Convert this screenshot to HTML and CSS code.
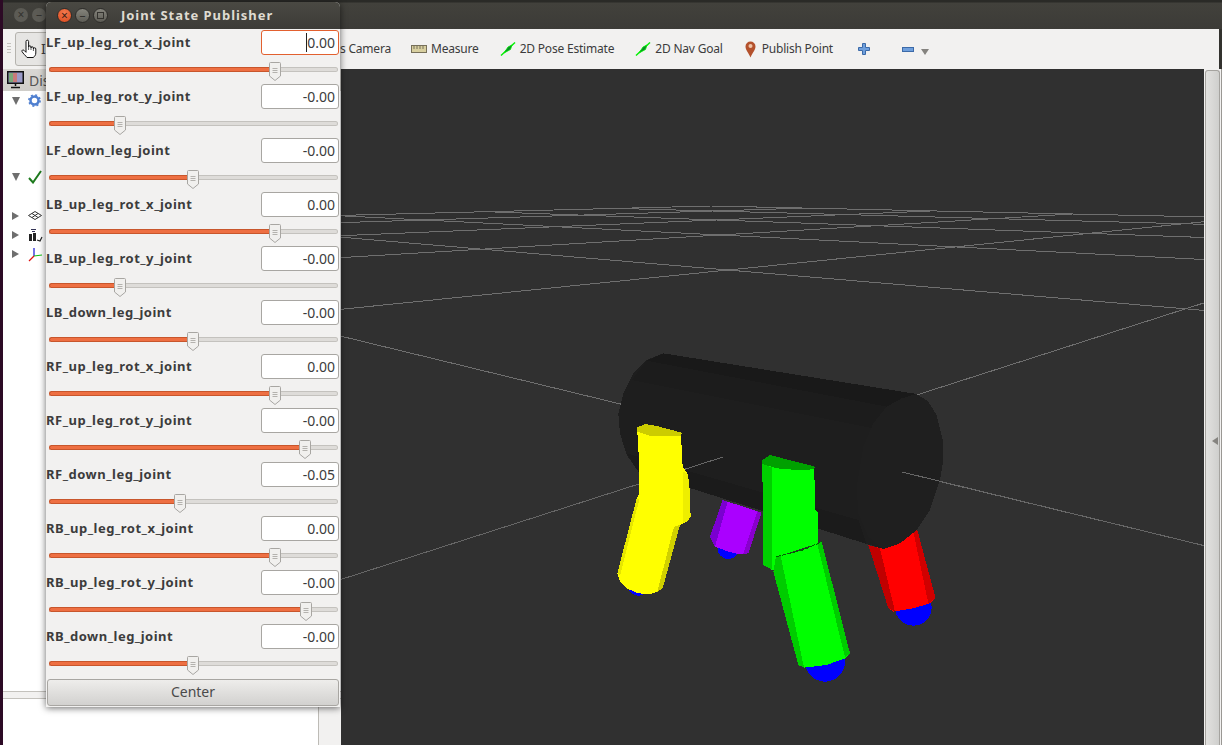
FILE: index.html
```html
<!DOCTYPE html>
<html lang="en">
<head>
  <meta charset="UTF-8">
  <meta name="viewport" content="width=device-width, initial-scale=1.0">
  <title>RViz - Joint State Publisher</title>
  <link rel="stylesheet" href="styles.css">
</head>
<body>
  <svg class="defs" width="0" height="0">
    <symbol id="thumb" viewBox="0 0 12 19">
      <path d="M1.5.5h9a1 1 0 0 1 1 1V14L6 18.5.5 14V1.5a1 1 0 0 1 1-1z" fill="#f1f0ee" stroke="#a8a6a2"/>
      <path d="M3.5 6.5h5M3.5 8.5h5M3.5 10.5h5" stroke="#b4b2ae"/>
    </symbol>
    <symbol id="goal" viewBox="0 0 16 14">
      <path d="M1 13.5L15 .5" stroke="#00f000" stroke-width="1.4"/>
      <path d="M4 11L8 5 12 3 10.500 7.500z" fill="#0a8a2a" stroke="#00f000" stroke-width=".8"/>
    </symbol>
  </svg>

  <div class="main-window">
    <div class="titlebar">
      <span class="win-btn">&#215;</span>
      <span class="win-btn">&#8211;</span>
    </div>

    <div class="toolbar">
      <div class="toolbar-left">
        <span class="grip"></span>
        <div class="tool tool-active">
          <svg width="20" height="20" viewBox="0 0 20 20"><path d="M6 10V2.5a1.3 1.3 0 0 1 2.6 0V8a1.2 1.2 0 0 1 2.4 0v1a1.2 1.2 0 0 1 2.4 0v1a1.2 1.2 0 0 1 2.4 0v4c0 2.5-1.5 3.5-2.5 4.500H7c-1-1.500-4-4-5-6-.6-1.200 1-2 2-1.200l2 2z" fill="#fff" stroke="#111"/><path d="M8.600 8v3M11 9v2M13.400 10v2" stroke="#111" stroke-width=".7"/></svg>
          <span>I</span>
        </div>
      </div>
      <div class="tool tool-focus"><span>s Camera</span></div>
      <div class="tool">
        <svg width="16" height="8" viewBox="0 0 16 8"><rect x=".5" y=".5" width="15" height="7" fill="#d8cf9f" stroke="#77705a"/><path d="M3 1v3M6 1v3M9 1v3M12 1v3" stroke="#77705a"/></svg>
        <span>Measure</span>
      </div>
      <div class="tool"><svg width="16" height="14"><use href="#goal"/></svg><span>2D Pose Estimate</span></div>
      <div class="tool"><svg width="16" height="14"><use href="#goal"/></svg><span>2D Nav Goal</span></div>
      <div class="tool tool-pin">
        <svg width="11" height="17" viewBox="0 0 11 17"><path d="M5.500.5a5 5 0 0 1 5 5c0 3.500-3 6-5 11-2-5-5-7.500-5-11a5 5 0 0 1 5-5z" fill="#b4512c"/><circle cx="5.500" cy="5" r="2" fill="#f0c4a8"/></svg>
        <span>Publish Point</span>
      </div>
      <svg class="plus" width="12" height="12" viewBox="0 0 12 12"><path d="M4.500.5h3v4h4v3h-4v4h-3v-4h-4v-3h4z" fill="#6f9fdc" stroke="#3c6aa8"/></svg>
      <svg class="minus" width="12" height="5" viewBox="0 0 12 5"><rect x=".5" y=".5" width="11" height="4" fill="#6f9fdc" stroke="#3c6aa8"/></svg>
      <span class="more"></span>
    </div>

    <div class="workspace">
      <div class="side-panel">
        <div class="panel-head">
          <svg width="17" height="18" viewBox="0 0 17 18">
            <rect x=".75" y=".75" width="15.500" height="11.500" fill="#9a9ac8" stroke="#111" stroke-width="1.500"/>
            <rect x="2" y="2" width="4" height="9" fill="#7aa87a"/>
            <rect x="6" y="2" width="4" height="9" fill="#c87a7a"/>
            <path d="M8.500 13v2M4 16.500h9" stroke="#111" stroke-width="1.500"/>
          </svg>
          <span>Dis</span>
        </div>
        <div class="tree">
          <div class="tree-row">
            <span class="tri-down"></span>
            <svg width="13" height="13" viewBox="0 0 13 13"><circle cx="6.500" cy="6.500" r="4" fill="none" stroke="#4f7fd0" stroke-width="2.500"/><circle cx="6.500" cy="6.500" r="5.600" fill="none" stroke="#4f7fd0" stroke-width="1.600" stroke-dasharray="2 2.400"/></svg>
          </div>
          <div class="tree-row"></div>
          <div class="tree-row"></div>
          <div class="tree-row"></div>
          <div class="tree-row">
            <span class="tri-down"></span>
            <svg width="14" height="14" viewBox="0 0 14 14"><path d="M1 8l4 4.500L13 1" fill="none" stroke="#1d7a1d" stroke-width="2"/></svg>
          </div>
          <div class="tree-row"></div>
          <div class="tree-row">
            <span class="tri-right"></span>
            <svg width="14" height="9" viewBox="0 0 14 9"><path d="M7 .5l6.500 4L7 8.500.5 4.500zM4 2.500l6 4M10 2.500l-6 4" fill="none" stroke="#333"/></svg>
          </div>
          <div class="tree-row">
            <span class="tri-right"></span>
            <svg width="15" height="15" viewBox="0 0 15 15"><path d="M3 2.500h5M4 4.500h3" stroke="#335"/><path d="M1 14V7h3v7zM5 14V6h3v8z" fill="#222"/><path d="M9 13l3 1 2-4" fill="none" stroke="#222" stroke-width="1.200"/></svg>
          </div>
          <div class="tree-row">
            <span class="tri-right"></span>
            <svg width="15" height="15" viewBox="0 0 15 15"><path d="M6 9V1" stroke="#1414d8" stroke-width="1.200"/><path d="M6 9l8-1" stroke="#10c010" stroke-width="1.200"/><path d="M6 9l-5 5" stroke="#e01010" stroke-width="1.200"/></svg>
          </div>
        </div>
        <div class="panel-split"></div>
        <div class="panel-foot">
          <div class="foot-white"></div>
          <div class="foot-grey"></div>
        </div>
      </div>

      <svg class="scene" width="863" height="676" viewBox="341 69 863 676">
        <g class="grid-lines" shape-rendering="crispEdges">
          <path d="M341 579.400L1204 302.900"/>
          <path d="M341 309.300L1204 221.700"/>
          <path d="M341 257.600L1072 214"/>
          <path d="M341 235.700L933 210.900"/>
          <path d="M341 222.600L805 208.100"/>
          <path d="M341 215.400L711 206"/>
          <path d="M341 336.200L1204 545.600"/>
          <path d="M341 237.200L1204 310.400"/>
          <path d="M341 215.800L1204 259.500"/>
          <path d="M486 211.700L1204 237.500"/>
          <path d="M617 208.400L1204 224.300"/>
          <path d="M711 206L1204 216.900"/>
        </g>
        <g transform="translate(600 340) scale(.33333)" shape-rendering="crispEdges">
          <circle cx="385" cy="625" r="32" fill="#0000ff"/>
          <path d="M368 480L485 518 445 640 415 642 385 635 345 620 330 590z" fill="#aa00ff"/>
          <path d="M368 480L383 485 345 620 330 590z" fill="#7a00d0"/>
          <path d="M472 514L485 518 445 640 430 642z" fill="#8800cc"/>
          <circle cx="940" cy="802" r="55" fill="#0000ff"/>
          <path d="M805 615L850 627 900 610 950 570 1007 775 990 790 940 805 880 815 865 805z" fill="#ff0000"/>
          <path d="M805 615L840 625 885 815 865 805z" fill="#c00000"/>
          <path d="M940 575L952 570 1007 775 985 790z" fill="#d00000"/>
          <path d="M190 40L950 162 985 185 1010 225 1028 300 1030 360 1020 420 990 510 950 570 900 610 850 627 800 612 115 395 80 345 60 280 55 220 70 160 100 100 140 60z" fill="#1e1e1e"/>
          <path d="M190 40L950 162 905 175 860 200 140 62z" fill="#191919"/>
          <path d="M140 62L860 200 820 265 95 120z" fill="#1c1c1c"/>
          <path d="M80 340L775 540 800 612 115 395z" fill="#1b1b1b"/>
          <path d="M950 162L985 185 1010 225 1028 300 1030 360 1020 420 990 510 950 570 900 610 850 627 805 590 775 520 770 440 790 320 820 250 860 200 905 175z" fill="#1f1f1f"/>
        </g>
        <g class="grid-front" shape-rendering="crispEdges">
          <path d="M341 579.400L723 457"/>
          <path d="M902 472L1204 545.600"/>
        </g>
        <g transform="translate(600 340) scale(.33333)" shape-rendering="crispEdges">
          <circle cx="115" cy="735" r="32" fill="#0000ff"/>
          <path d="M112 262L135 252 170 258 245 278 243 290 200 287 150 287 112 277z" fill="#cccc00"/>
          <path d="M112 275L150 287 200 287 243 287 248 380 262 400 268 430 272 530 262 545 240 555 188 745 172 755 150 762 115 760 80 745 60 725 52 700 110 475 118 460 118 380z" fill="#ffff00"/>
          <path d="M240 555L188 745 172 755 222 560z" fill="#d0d000"/>
          <path d="M250 395L262 400 268 430 272 530 262 545 250 548z" fill="#eeee00"/>
          <path d="M110 475L52 700 60 708 118 478z" fill="#e6e600"/>
          <circle cx="675" cy="965" r="60" fill="#0000ff"/>
          <path d="M487 360L510 345 560 358 645 380 640 392 590 392 530 387 487 372z" fill="#00a000"/>
          <path d="M487 372L530 385 590 390 643 388 645 510 655 520 655 610 530 650 520 692 490 675z" fill="#00ff00"/>
          <path d="M487 372L515 382 515 688 490 675z" fill="#00d000"/>
          <path d="M520 695L528 650 610 630 665 605 750 940 735 955 680 975 612 983 595 975z" fill="#00ff00"/>
          <path d="M520 695L528 650 542 648 612 983 595 975z" fill="#00cc00"/>
          <path d="M665 605L750 940 735 952 652 612z" fill="#00cc00"/>
          <path d="M528 650L610 630 665 605" fill="none" stroke="#006400" stroke-width="3" stroke-dasharray="14 4"/>
        </g>
      </svg>

      <div class="right-edge">
        <div class="splitter"><span class="arrow-left"></span></div>
        <div class="right-strip">
          <span class="mark-blue"></span>
          <span class="mark-line"></span>
          <span class="mark-line"></span>
          <span class="mark-dark"></span>
          <span class="mark-line"></span>
          <span class="mark-line"></span>
          <span class="mark-blue"></span>
          <span class="mark-line"></span>
        </div>
      </div>
    </div>
  </div>

  <div class="dialog">
    <div class="dialog-title">
      <span class="dot dot-close">&#215;</span>
      <span class="dot dot-min">&#8211;</span>
      <span class="dot dot-max"><span class="max-box"></span></span>
      <span class="dialog-name">Joint State Publisher</span>
    </div>

    <div class="joints">
      <div class="joint">
        <div class="joint-head">
          <span class="joint-name">LF_up_leg_rot_x_joint</span>
          <div class="value value-focus"><span class="caret">0.00</span></div>
        </div>
        <div class="slider">
          <span class="fill" style="width:220px"></span><svg class="thumb" width="12" height="19"><use href="#thumb"/></svg><span class="rest"></span>
        </div>
      </div>
      <div class="joint">
        <div class="joint-head">
          <span class="joint-name">LF_up_leg_rot_y_joint</span>
          <div class="value">-0.00</div>
        </div>
        <div class="slider">
          <span class="fill" style="width:65px"></span><svg class="thumb" width="12" height="19"><use href="#thumb"/></svg><span class="rest"></span>
        </div>
      </div>
      <div class="joint">
        <div class="joint-head">
          <span class="joint-name">LF_down_leg_joint</span>
          <div class="value">-0.00</div>
        </div>
        <div class="slider">
          <span class="fill" style="width:138px"></span><svg class="thumb" width="12" height="19"><use href="#thumb"/></svg><span class="rest"></span>
        </div>
      </div>
      <div class="joint">
        <div class="joint-head">
          <span class="joint-name">LB_up_leg_rot_x_joint</span>
          <div class="value">0.00</div>
        </div>
        <div class="slider">
          <span class="fill" style="width:220px"></span><svg class="thumb" width="12" height="19"><use href="#thumb"/></svg><span class="rest"></span>
        </div>
      </div>
      <div class="joint">
        <div class="joint-head">
          <span class="joint-name">LB_up_leg_rot_y_joint</span>
          <div class="value">-0.00</div>
        </div>
        <div class="slider">
          <span class="fill" style="width:65px"></span><svg class="thumb" width="12" height="19"><use href="#thumb"/></svg><span class="rest"></span>
        </div>
      </div>
      <div class="joint">
        <div class="joint-head">
          <span class="joint-name">LB_down_leg_joint</span>
          <div class="value">-0.00</div>
        </div>
        <div class="slider">
          <span class="fill" style="width:138px"></span><svg class="thumb" width="12" height="19"><use href="#thumb"/></svg><span class="rest"></span>
        </div>
      </div>
      <div class="joint">
        <div class="joint-head">
          <span class="joint-name">RF_up_leg_rot_x_joint</span>
          <div class="value">0.00</div>
        </div>
        <div class="slider">
          <span class="fill" style="width:220px"></span><svg class="thumb" width="12" height="19"><use href="#thumb"/></svg><span class="rest"></span>
        </div>
      </div>
      <div class="joint">
        <div class="joint-head">
          <span class="joint-name">RF_up_leg_rot_y_joint</span>
          <div class="value">-0.00</div>
        </div>
        <div class="slider">
          <span class="fill" style="width:250px"></span><svg class="thumb" width="12" height="19"><use href="#thumb"/></svg><span class="rest"></span>
        </div>
      </div>
      <div class="joint">
        <div class="joint-head">
          <span class="joint-name">RF_down_leg_joint</span>
          <div class="value">-0.05</div>
        </div>
        <div class="slider">
          <span class="fill" style="width:125px"></span><svg class="thumb" width="12" height="19"><use href="#thumb"/></svg><span class="rest"></span>
        </div>
      </div>
      <div class="joint">
        <div class="joint-head">
          <span class="joint-name">RB_up_leg_rot_x_joint</span>
          <div class="value">0.00</div>
        </div>
        <div class="slider">
          <span class="fill" style="width:220px"></span><svg class="thumb" width="12" height="19"><use href="#thumb"/></svg><span class="rest"></span>
        </div>
      </div>
      <div class="joint">
        <div class="joint-head">
          <span class="joint-name">RB_up_leg_rot_y_joint</span>
          <div class="value">-0.00</div>
        </div>
        <div class="slider">
          <span class="fill" style="width:251px"></span><svg class="thumb" width="12" height="19"><use href="#thumb"/></svg><span class="rest"></span>
        </div>
      </div>
      <div class="joint">
        <div class="joint-head">
          <span class="joint-name">RB_down_leg_joint</span>
          <div class="value">-0.00</div>
        </div>
        <div class="slider">
          <span class="fill" style="width:138px"></span><svg class="thumb" width="12" height="19"><use href="#thumb"/></svg><span class="rest"></span>
        </div>
      </div>
    </div>

    <div class="center-btn">Center</div>
  </div>
</body>
</html>
```

FILE: styles.css
```css
* {
  box-sizing: border-box;
}

html,
body {
  margin: 0;
  height: 745px;
  overflow: hidden;
}

body {
  position: relative;
  background-color: #2c0a25;
  font-family: "Noto Sans", "Open Sans", sans-serif;
  color: #3c3c3c;
}

.defs {
  position: absolute;
}

/* window behind the dialog */
.main-window {
  display: flex;
  flex-direction: column;
  height: 745px;
  margin-left: 3px;
  background-color: #33322e;
}

.titlebar {
  display: flex;
  align-items: center;
  gap: 4px;
  flex: none;
  height: 29px;
  padding: 1px 0 0 11px;
  background: linear-gradient(#2a2a27 0, #2a2a27 2px, #42413c 3px, #3c3b37 100%);
}

.win-btn {
  width: 14px;
  height: 14px;
  border-radius: 50%;
  background-color: #5c5b55;
  font-size: 12px;
  line-height: 14px;
  text-align: center;
  color: #33322e;
}

.toolbar {
  display: flex;
  align-items: center;
  flex: none;
  height: 40px;
  margin-right: 3px;
  background-color: #f2f1f0;
  font-size: 12px;
  letter-spacing: -0.2px;
  white-space: nowrap;
}

.toolbar-left {
  display: flex;
  align-items: center;
  flex: none;
  width: 337px;
}

.grip {
  width: 4px;
  height: 12px;
  margin: 0 4px 0 4px;
  background: repeating-linear-gradient(#c4c2be 0, #c4c2be 1px, transparent 1px, transparent 3px);
}

.tool {
  display: flex;
  align-items: center;
  gap: 4px;
  margin-right: 21px;
}

.tool span {
  margin-top: -2px;
}

.tool-active {
  gap: 1px;
  width: 50px;
  height: 34px;
  padding: 0 0 0 4px;
  margin-right: 0;
  border: 1px solid #b5b3ae;
  border-radius: 3px;
  background-color: #e6e5e3;
  font-size: 14px;
  letter-spacing: 0;
}

.tool-focus {
  justify-content: flex-end;
  width: 51px;
  margin-right: 20px;
}

.tool-pin {
  gap: 6px;
  margin-left: 1px;
  margin-right: 25px;
}

.plus {
  flex: none;
  margin-right: 32px;
}

.minus {
  flex: none;
  margin-right: 7px;
}

.more {
  width: 0;
  height: 0;
  margin-top: 5px;
  border-top: 6px solid #85837f;
  border-left: 4px solid transparent;
  border-right: 4px solid transparent;
}

.workspace {
  display: flex;
  flex: 1;
  min-height: 0;
}

/* left panel, mostly under the dialog */
.side-panel {
  display: flex;
  flex-direction: column;
  flex: none;
  width: 338px;
  background-color: #fff;
}

.panel-head {
  display: flex;
  align-items: center;
  gap: 5px;
  flex: none;
  height: 22px;
  padding-left: 4px;
  background: linear-gradient(#d9d7d3, #cfcdc9);
  font-size: 14px;
  color: #555;
}

.tree {
  flex: 1;
}

.tree-row {
  display: flex;
  align-items: center;
  height: 19.2px;
  padding-left: 9px;
}

.tree-row svg {
  flex: none;
  margin-left: 8px;
}

.tri-down,
.tri-right {
  flex: none;
  width: 8px;
  height: 0;
}

.tri-down {
  border-top: 8px solid #6e6e6e;
  border-left: 4px solid transparent;
  border-right: 4px solid transparent;
}

.tri-right {
  height: 8px;
  border-left: 7px solid #6e6e6e;
  border-top: 4px solid transparent;
  border-bottom: 4px solid transparent;
}

.panel-split {
  flex: none;
  height: 8px;
  border-top: 1px solid #c4c2bd;
  border-bottom: 1px solid #c4c2bd;
  background-color: #f2f1f0;
}

.panel-foot {
  display: flex;
  flex: none;
  height: 46px;
}

.foot-white {
  flex: 1;
  border-right: 1px solid #bdbbb6;
}

.foot-grey {
  width: 22px;
  background-color: #f2f1f0;
}

/* 3d view */
.scene {
  display: block;
  flex: none;
  background-color: #303030;
}

.grid-lines path {
  fill: none;
  stroke: #6f6f6f;
  stroke-width: 1;
}

.grid-front path {
  fill: none;
  stroke: #666;
  stroke-width: 1;
}

.right-edge {
  display: flex;
  flex: 1;
  padding-left: 1px;
  background-color: #f2f1f0;
}

.splitter {
  display: flex;
  align-items: center;
  justify-content: flex-end;
  width: 15px;
  margin-top: 1px;
  padding: 66px 1px 0 0;
  border: 1px solid #a5a39f;
  border-bottom: 0;
  border-radius: 3px 3px 0 0;
  background: linear-gradient(90deg, #e2e1df, #cfcfcd);
}

.arrow-left {
  width: 0;
  height: 0;
  border-right: 6px solid #85837f;
  border-top: 4px solid transparent;
  border-bottom: 4px solid transparent;
}

.right-strip {
  display: flex;
  flex-direction: column;
  flex: 1;
  margin-left: 1px;
  padding: 64px 0 0 1px;
  border-left: 1px solid #9a9894;
  background-color: #dcdad6;
}

.mark-blue {
  flex: none;
  height: 8px;
  background-color: #6f9fdc;
}

.mark-line {
  flex: none;
  height: 1px;
  background-color: #55534f;
}

.mark-dark {
  flex: none;
  height: 26px;
  margin-top: 3px;
  background-color: #6c6a66;
}

.mark-blue + .mark-line {
  margin-top: 70px;
}

.mark-line + .mark-line {
  margin-top: 51px;
}

.mark-dark + .mark-line {
  margin-top: 8px;
}

.mark-dark + .mark-line + .mark-line {
  margin-top: 18px;
}

.mark-line + .mark-blue {
  margin-top: 5px;
}

.mark-line + .mark-blue + .mark-line {
  margin-top: 245px;
}

/* joint state publisher window */
.dialog {
  position: absolute;
  top: 2px;
  left: 46px;
  display: flex;
  flex-direction: column;
  width: 294px;
  height: 705px;
  border-radius: 5px 5px 0 0;
  background-color: #f2f1f0;
  box-shadow: 0 1px 7px rgba(0, 0, 0, 0.6);
}

.dialog-title {
  display: flex;
  align-items: center;
  flex: none;
  height: 27px;
  padding-left: 11px;
  border-radius: 5px 5px 0 0;
  background: linear-gradient(#4a4943, #3c3b37);
}

.dot {
  display: flex;
  align-items: center;
  justify-content: center;
  width: 15px;
  height: 15px;
  margin-right: 3px;
  border: 1px solid #2e2d2a;
  border-radius: 50%;
  background: linear-gradient(#85847c, #5e5d56);
  font-size: 12px;
  line-height: 1;
  color: #33322e;
}

.dot-close {
  background: radial-gradient(circle at 50% 30%, #f47a4e, #d9481c);
  color: #3c2016;
}

.max-box {
  width: 7px;
  height: 7px;
  border: 1px solid #33322e;
}

.dialog-name {
  margin-left: 10px;
  margin-top: -2px;
  font-size: 13px;
  font-weight: 700;
  letter-spacing: 0.95px;
  color: #dfdbd2;
  white-space: nowrap;
}

.joints {
  flex: none;
  padding-top: 1px;
}

.joint {
  height: 54px;
}

.joint-head {
  display: flex;
  align-items: center;
  justify-content: space-between;
  height: 25px;
  padding-right: 1px;
}

.joint-name {
  margin-top: -2px;
  font-size: 13px;
  font-weight: 700;
  letter-spacing: 0.5px;
  color: #3c3c3c;
  white-space: nowrap;
}

.value {
  width: 78px;
  height: 25px;
  padding-right: 3px;
  border: 1px solid #a8a6a2;
  border-radius: 3px;
  background-color: #fff;
  font-size: 14px;
  line-height: 23px;
  text-align: right;
}

.value-focus {
  border-color: #e2602f;
}

.caret {
  border-left: 1px solid #222;
}

.slider {
  display: flex;
  align-items: center;
  height: 29px;
  margin: 0 2px 0 3px;
}

.fill {
  flex: none;
  height: 5px;
  border: 1px solid #c8562c;
  border-right: 0;
  border-radius: 3px 0 0 3px;
  background-color: #ee6f42;
}

.thumb {
  flex: none;
  margin-top: 3px;
}

.rest {
  flex: 1;
  height: 5px;
  border: 1px solid #c4c2be;
  border-left: 0;
  border-radius: 0 3px 3px 0;
  background-color: #dedcd9;
}

.center-btn {
  flex: none;
  height: 27px;
  margin: 1px 1px 0;
  border: 1px solid #a8a6a2;
  border-radius: 3px;
  background: linear-gradient(#eeedeb, #d2d1cf);
  font-size: 14px;
  line-height: 23px;
  text-align: center;
  color: #4a4a4a;
}
```
